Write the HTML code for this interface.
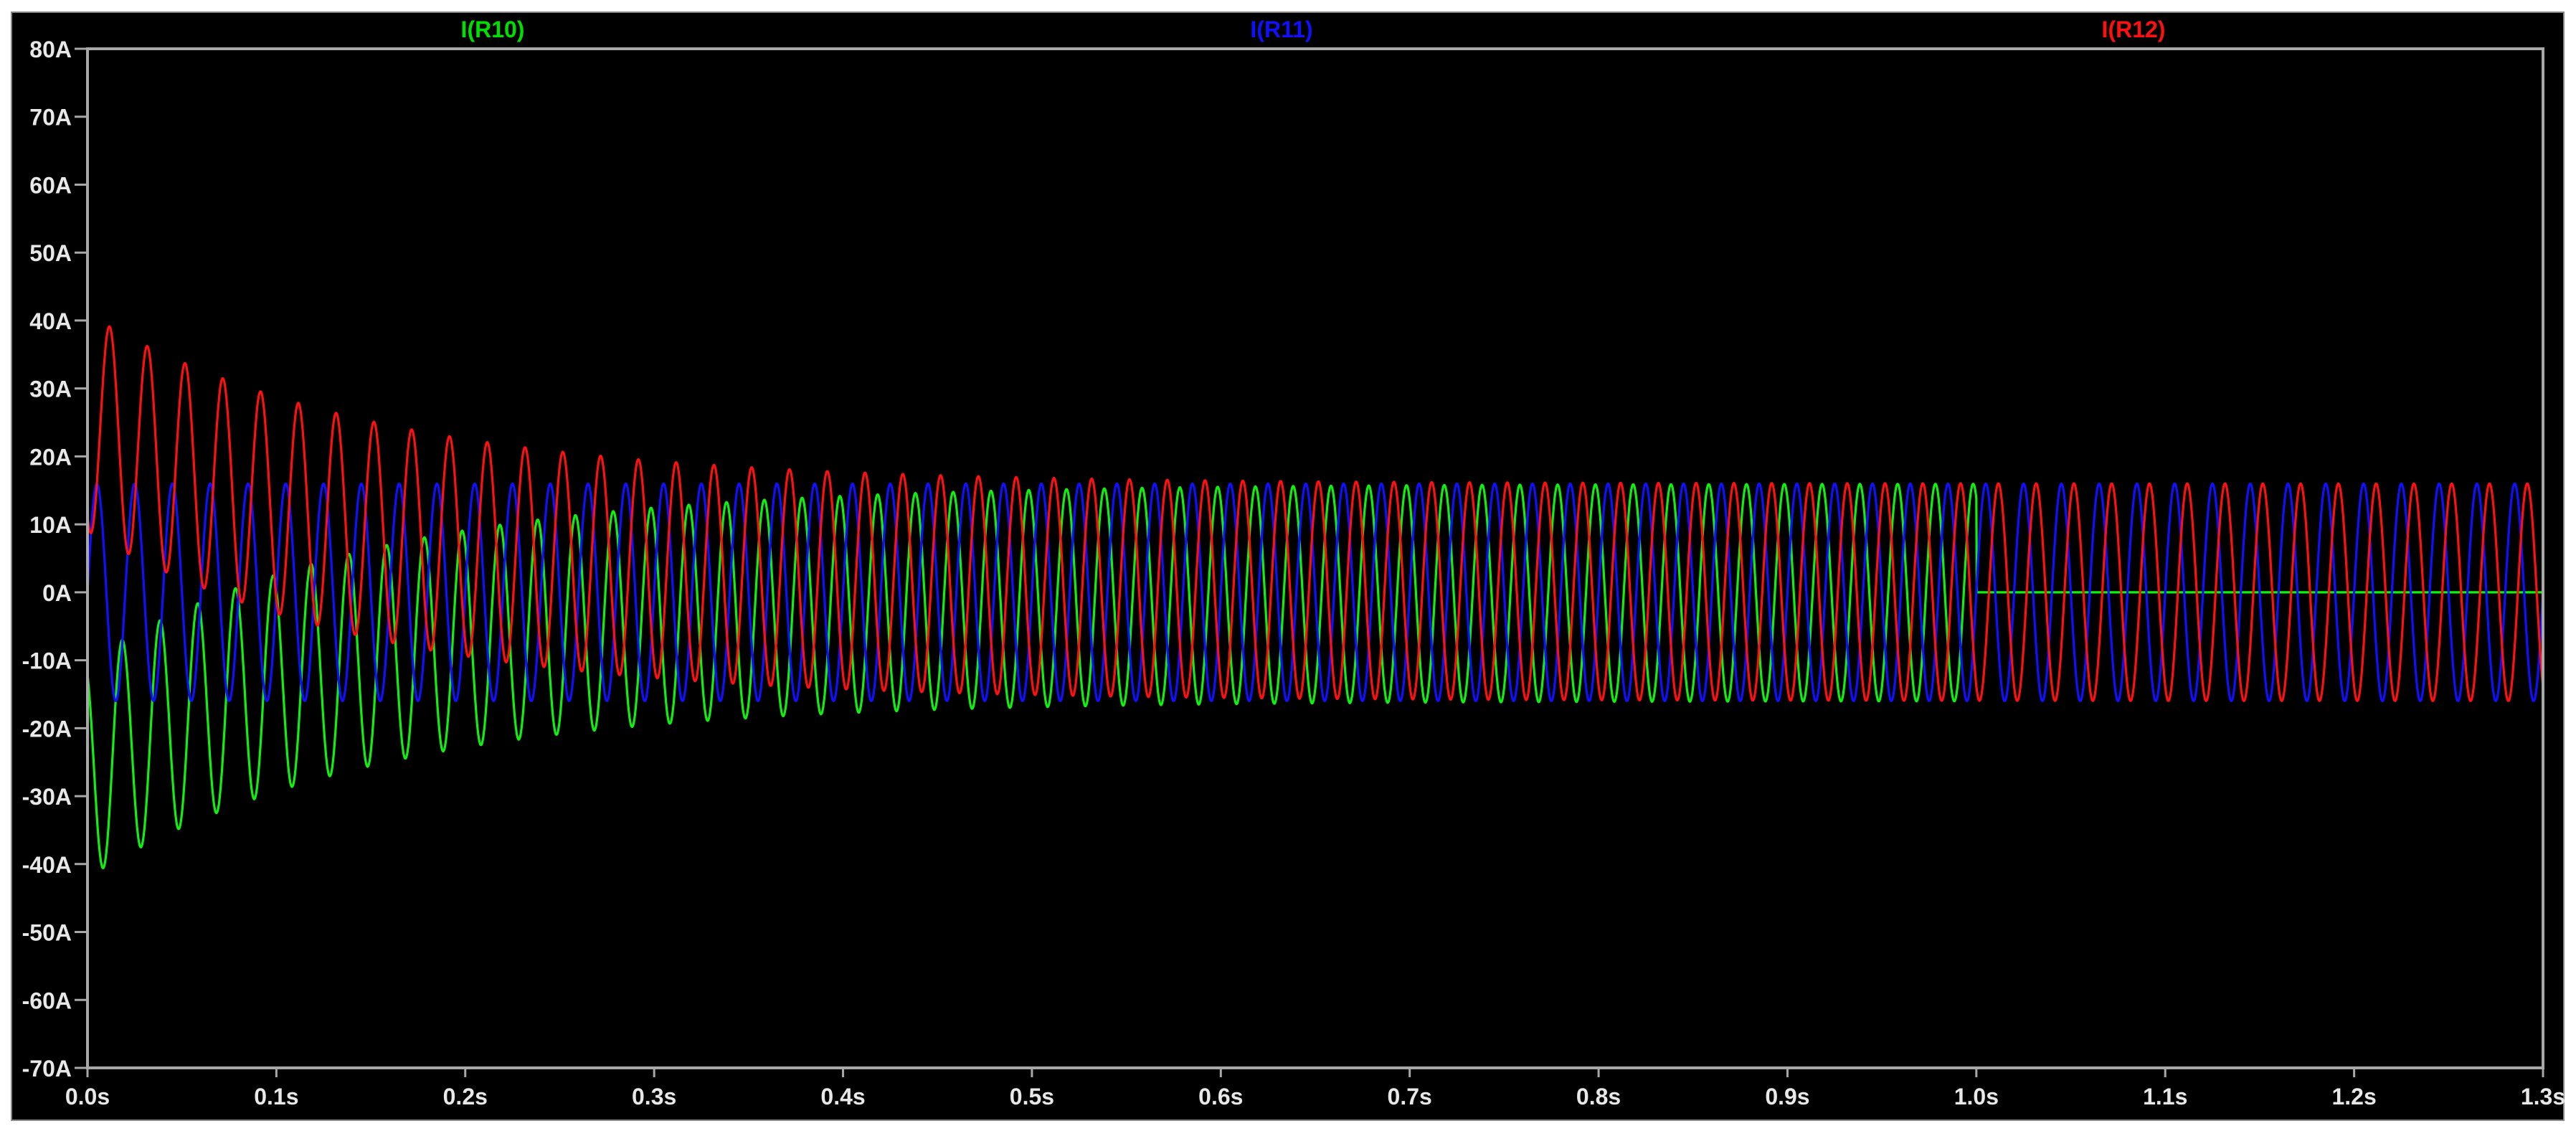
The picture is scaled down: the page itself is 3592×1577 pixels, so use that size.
<!DOCTYPE html>
<html><head><meta charset="utf-8"><style>
html,body{margin:0;padding:0;background:#fff;width:3592px;height:1577px;overflow:hidden}
svg{display:block}
text{font-family:"Liberation Sans",sans-serif;font-weight:bold}
</style></head><body>
<svg id="s" width="3592" height="1577" viewBox="0 0 3592 1577">
<rect x="16" y="17" width="3559" height="1545" fill="#000" stroke="#888" stroke-width="2"/>
<g id="lab" font-size="32" fill="#e8e8e8"></g>
<text x="687" y="52" font-size="32" fill="#00e000" text-anchor="middle">I(R10)</text>
<text x="1787" y="52" font-size="32" fill="#1010ff" text-anchor="middle">I(R11)</text>
<text x="2975" y="52" font-size="32" fill="#ff1010" text-anchor="middle">I(R12)</text>
<g id="w" fill="none" stroke-width="3.2" stroke-linejoin="round"></g>
<rect x="122" y="68" width="3424" height="1421" fill="none" stroke="#a8a8a8" stroke-width="4"/>
</svg>
<script>
var NS="http://www.w3.org/2000/svg",x0=122,x1=3546,y0=68,y1=1489;
function X(t){return x0+(x1-x0)*t/1.3}
function Y(a){return y0+(80-a)*(y1-y0)/150}
var lab=document.getElementById('lab'),s=document.getElementById('s');
function el(n,a,p){var e=document.createElementNS(NS,n);for(var k in a)e.setAttribute(k,a[k]);(p||s).appendChild(e);return e}
for(var v=80;v>=-70;v-=10){var y=Y(v);
 var t=el('text',{x:100,y:y+12,'text-anchor':'end'},lab);t.textContent=v+'A';
 el('line',{x1:104,y1:y,x2:122,y2:y,stroke:'#a8a8a8','stroke-width':3});}
for(var i=0;i<=13;i++){var x=X(i/10);
 var t=el('text',{x:x,y:1540,'text-anchor':'middle'},lab);t.textContent=(i/10).toFixed(1)+'s';
 el('line',{x1:x,y1:1489,x2:x,y2:1502,stroke:'#a8a8a8','stroke-width':3});}
var w=document.getElementById('w'),om=2*Math.PI*50,tau=0.15;
function g(t){return t>1.0?0:16*Math.sin(om*t+2*Math.PI/3)-26*Math.exp(-t/tau)}
function b(t){return 16*Math.sin(om*t)}
function r(t){return 16*Math.sin(om*t-2*Math.PI/3)+25*Math.exp(-t/tau)}
[[g,'#10f010'],[b,'#1010ff'],[r,'#ff1010']].forEach(function(f){
 var d='';for(var k=0;k<=5200;k++){var t=k*1.3/5200;d+=(k?'L':'M')+X(t).toFixed(1)+' '+Y(f[0](t)).toFixed(1);}
 el('path',{d:d,stroke:f[1]},w);});
</script>
</body></html>
